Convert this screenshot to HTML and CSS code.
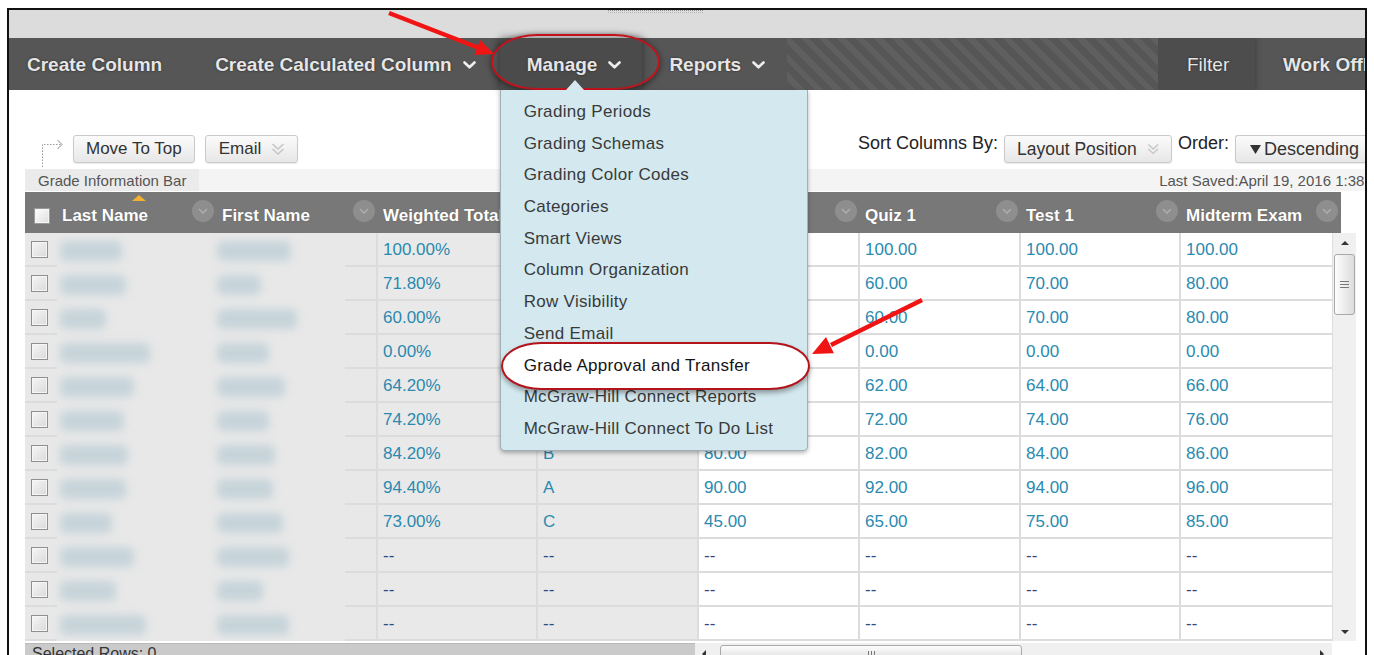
FILE: index.html
```html
<!DOCTYPE html>
<html lang="en">
<head>
<meta charset="utf-8">
<title>Full Grade Center</title>
<link rel="stylesheet" href="styles.css">
</head>
<body>
<div class="frame">
  <div class="topbar"><span class="grip"></span></div>

  <nav class="actionbar">
    <div class="nav-left">
      <span class="nav-item first">Create Column</span>
      <span class="nav-item calc">Create Calculated Column
        <svg class="chev" width="13" height="8" viewBox="0 0 13 8"><polyline points="1.5,1.5 6.5,6.3 11.5,1.5"/></svg>
      </span>
      <span class="nav-item open">Manage
        <svg class="chev" width="13" height="8" viewBox="0 0 13 8"><polyline points="1.5,1.5 6.5,6.3 11.5,1.5"/></svg>
        <ul class="menu">
          <li>Grading Periods</li>
          <li>Grading Schemas</li>
          <li>Grading Color Codes</li>
          <li>Categories</li>
          <li>Smart Views</li>
          <li>Column Organization</li>
          <li>Row Visibility</li>
          <li>Send Email</li>
          <li class="flagged"><span>Grade Approval and Transfer</span></li>
          <li>McGraw-Hill Connect Reports</li>
          <li>McGraw-Hill Connect To Do List</li>
        </ul>
      </span>
      <span class="nav-item">Reports
        <svg class="chev" width="13" height="8" viewBox="0 0 13 8"><polyline points="1.5,1.5 6.5,6.3 11.5,1.5"/></svg>
      </span>
    </div>
    <div class="nav-stripes"></div>
    <div class="nav-right">
      <span class="nav-item filter">Filter</span>
      <span class="nav-item work">Work Offline</span>
    </div>
  </nav>

  <main class="content">
    <div class="toolbar">
      <div class="tool-left">
        <svg class="move-icon" width="26" height="31" viewBox="0 0 26 31">
          <path d="M2.5 31 V8.5 H21"/>
          <polyline class="head" points="17.5,4 22,8.5 17.5,13"/>
        </svg>
        <button class="btn">Move To Top</button>
        <button class="btn">Email
          <svg class="dbl" width="14" height="14" viewBox="0 0 14 14"><polyline points="1.5,2 7,7 12.5,2"/><polyline points="1.5,7 7,12 12.5,7"/></svg>
        </button>
      </div>
      <div class="tool-right">
        <span class="lbl">Sort Columns By:</span>
        <button class="btn sel">Layout Position
          <svg class="dbl" width="14" height="14" viewBox="0 0 14 14"><polyline points="1.5,2 7,7 12.5,2"/><polyline points="1.5,7 7,12 12.5,7"/></svg>
        </button>
        <span class="lbl">Order:</span>
        <button class="btn order"><svg width="11" height="9" viewBox="0 0 11 9"><polygon points="0,0 11,0 5.5,9"/></svg>Descending</button>
      </div>
    </div>

    <div class="infobar">
      <span class="info-tab">Grade Information Bar</span>
      <span class="saved">Last Saved:April 19, 2016 1:38 PM</span>
    </div>

    <section class="grade-grid">
      <div class="head-row">
        <div class="h chk"><span class="box hbox"></span></div>
        <div class="h sorted">Last Name<span class="sort-mark"></span><span class="hmenu"><svg width="10" height="6" viewBox="0 0 10 6"><polyline points="1,1 5,5 9,1"/></svg></span></div>
        <div class="h">First Name<span class="hmenu"><svg width="10" height="6" viewBox="0 0 10 6"><polyline points="1,1 5,5 9,1"/></svg></span></div>
        <div class="h">Weighted Total<span class="hmenu"><svg width="10" height="6" viewBox="0 0 10 6"><polyline points="1,1 5,5 9,1"/></svg></span></div>
        <div class="h">Total<span class="hmenu"><svg width="10" height="6" viewBox="0 0 10 6"><polyline points="1,1 5,5 9,1"/></svg></span></div>
        <div class="h">Homework 1<span class="hmenu"><svg width="10" height="6" viewBox="0 0 10 6"><polyline points="1,1 5,5 9,1"/></svg></span></div>
        <div class="h">Quiz 1<span class="hmenu"><svg width="10" height="6" viewBox="0 0 10 6"><polyline points="1,1 5,5 9,1"/></svg></span></div>
        <div class="h">Test 1<span class="hmenu"><svg width="10" height="6" viewBox="0 0 10 6"><polyline points="1,1 5,5 9,1"/></svg></span></div>
        <div class="h">Midterm Exam<span class="hmenu"><svg width="10" height="6" viewBox="0 0 10 6"><polyline points="1,1 5,5 9,1"/></svg></span></div>
      </div>

      <div class="body-wrap">
        <div class="rows-view">
          <div class="row"><div class="c chk"><span class="box"></span></div><div class="c nm"><span class="blob" style="width:62px"></span></div><div class="c nm fn"><span class="blob" style="width:74px"></span></div><div class="c gr">100.00%</div><div class="c gr">A</div><div class="c">100.00</div><div class="c">100.00</div><div class="c">100.00</div><div class="c">100.00</div></div>
          <div class="row"><div class="c chk"><span class="box"></span></div><div class="c nm"><span class="blob" style="width:66px"></span></div><div class="c nm fn"><span class="blob" style="width:44px"></span></div><div class="c gr">71.80%</div><div class="c gr">C</div><div class="c">80.00</div><div class="c">60.00</div><div class="c">70.00</div><div class="c">80.00</div></div>
          <div class="row"><div class="c chk"><span class="box"></span></div><div class="c nm"><span class="blob" style="width:46px"></span></div><div class="c nm fn"><span class="blob" style="width:80px"></span></div><div class="c gr">60.00%</div><div class="c gr">D</div><div class="c">60.00</div><div class="c">60.00</div><div class="c">70.00</div><div class="c">80.00</div></div>
          <div class="row"><div class="c chk"><span class="box"></span></div><div class="c nm"><span class="blob" style="width:90px"></span></div><div class="c nm fn"><span class="blob" style="width:52px"></span></div><div class="c gr">0.00%</div><div class="c gr">F</div><div class="c">0.00</div><div class="c">0.00</div><div class="c">0.00</div><div class="c">0.00</div></div>
          <div class="row"><div class="c chk"><span class="box"></span></div><div class="c nm"><span class="blob" style="width:74px"></span></div><div class="c nm fn"><span class="blob" style="width:68px"></span></div><div class="c gr">64.20%</div><div class="c gr">D</div><div class="c">60.00</div><div class="c">62.00</div><div class="c">64.00</div><div class="c">66.00</div></div>
          <div class="row"><div class="c chk"><span class="box"></span></div><div class="c nm"><span class="blob" style="width:64px"></span></div><div class="c nm fn"><span class="blob" style="width:52px"></span></div><div class="c gr">74.20%</div><div class="c gr">C</div><div class="c">70.00</div><div class="c">72.00</div><div class="c">74.00</div><div class="c">76.00</div></div>
          <div class="row"><div class="c chk"><span class="box"></span></div><div class="c nm"><span class="blob" style="width:68px"></span></div><div class="c nm fn"><span class="blob" style="width:58px"></span></div><div class="c gr">84.20%</div><div class="c gr">B</div><div class="c">80.00</div><div class="c">82.00</div><div class="c">84.00</div><div class="c">86.00</div></div>
          <div class="row"><div class="c chk"><span class="box"></span></div><div class="c nm"><span class="blob" style="width:66px"></span></div><div class="c nm fn"><span class="blob" style="width:56px"></span></div><div class="c gr">94.40%</div><div class="c gr">A</div><div class="c">90.00</div><div class="c">92.00</div><div class="c">94.00</div><div class="c">96.00</div></div>
          <div class="row"><div class="c chk"><span class="box"></span></div><div class="c nm"><span class="blob" style="width:52px"></span></div><div class="c nm fn"><span class="blob" style="width:66px"></span></div><div class="c gr">73.00%</div><div class="c gr">C</div><div class="c">45.00</div><div class="c">65.00</div><div class="c">75.00</div><div class="c">85.00</div></div>
          <div class="row empty"><div class="c chk"><span class="box"></span></div><div class="c nm"><span class="blob" style="width:74px"></span></div><div class="c nm fn"><span class="blob" style="width:72px"></span></div><div class="c gr">--</div><div class="c gr">--</div><div class="c">--</div><div class="c">--</div><div class="c">--</div><div class="c">--</div></div>
          <div class="row empty"><div class="c chk"><span class="box"></span></div><div class="c nm"><span class="blob" style="width:56px"></span></div><div class="c nm fn"><span class="blob" style="width:46px"></span></div><div class="c gr">--</div><div class="c gr">--</div><div class="c">--</div><div class="c">--</div><div class="c">--</div><div class="c">--</div></div>
          <div class="row empty"><div class="c chk"><span class="box"></span></div><div class="c nm"><span class="blob" style="width:86px"></span></div><div class="c nm fn"><span class="blob" style="width:72px"></span></div><div class="c gr">--</div><div class="c gr">--</div><div class="c">--</div><div class="c">--</div><div class="c">--</div><div class="c">--</div></div>
        </div>
        <div class="vscroll">
          <span class="arr up"></span>
          <span class="vthumb"><i></i><i></i><i></i></span>
          <span class="arr down"></span>
        </div>
      </div>

      <div class="foot-row">
        <div class="selected">Selected Rows: 0</div>
        <div class="hscroll">
          <span class="harr left"></span>
          <span class="hthumb"><i></i><i></i><i></i></span>
          <span class="harr right"></span>
        </div>
      </div>
    </section>
  </main>
</div>

<svg class="marks" width="1374" height="655" viewBox="0 0 1374 655">
  <line x1="389" y1="13" x2="479" y2="48" />
  <polygon points="494,54 474.3,54.9 480.1,39.9" />
  <line x1="922" y1="300" x2="831" y2="345" />
  <polygon points="812,354 833.9,353.3 826,337.1" />
</svg>
</body>
</html>
```

FILE: styles.css
```css
* { box-sizing: border-box; }

html, body {
  margin: 0;
  background: #fff;
}

body {
  width: 1374px;
  height: 655px;
  overflow: hidden;
  position: relative;
  font-family: "Liberation Sans", Arial, sans-serif;
  color: #333;
}

/* outer window frame */
.frame {
  margin: 8px 0 0 7px;
  width: 1360px;
  height: 700px;
  border: 2px solid #111;
  border-bottom: none;
  overflow: hidden;
  background: #fff;
}

.topbar {
  height: 28px;
  background: #dcdcdc;
}
.topbar .grip {
  display: block;
  margin-left: 599px;
  width: 95px;
  height: 3px;
  border-top: 1px dotted #8a8a8a;
  border-bottom: 1px dotted #b5b5b5;
}

/* action bar */
.actionbar {
  display: flex;
  height: 52px;
  background: #565656;
}
.nav-left { display: flex; flex-shrink: 0; }
.nav-item {
  display: flex;
  align-items: center;
  gap: 11px;
  padding: 1px 22px 0 27px;
  color: #e6e6e6;
  font-size: 19px;
  font-weight: bold;
  white-space: nowrap;
  text-shadow: 0 0 2px #1e1e1e;
}
.nav-item.first { padding: 1px 26px 0 18px; }
.nav-item.calc { padding-right: 24px; }
.chev { fill: none; stroke: #eee; stroke-width: 2.6; stroke-linecap: round; stroke-linejoin: round; }

.nav-item.open {
  position: relative;
  background: #4b4b4b;
  box-shadow: 0 0 8px rgba(0, 0, 0, .45);
  padding-right: 21px;
}
/* red highlight ring round the open tab */
.nav-item.open::after {
  content: "";
  position: absolute;
  top: -4px;
  bottom: 0;
  left: -9px;
  right: -18px;
  border: 2px solid #c3121c;
  border-radius: 46px / 28px;
  box-shadow: 0 1px 6px rgba(0, 0, 0, .55);
}

.nav-stripes {
  flex: 1;
  background: repeating-linear-gradient(45deg, #565656 0 7px, #5f5f5f 7px 13px);
}
.nav-right { display: flex; width: 207px; flex-shrink: 0; overflow: hidden; }
.nav-item.filter {
  width: 97px;
  flex-shrink: 0;
  padding: 1px 0 0 29px;
  font-weight: normal;
  background: #4d4d4d;
  box-shadow: 0 0 6px rgba(0, 0, 0, .35);
}
.nav-item.work { padding: 1px 0 0 28px; }

/* Manage dropdown */
.menu {
  position: absolute;
  z-index: 10;
  top: 100%;
  left: 0;
  width: 308px;
  margin: 0;
  padding: 6px 0 5px;
  list-style: none;
  background: #d3e9ef;
  border: 1px solid #9fb1b6;
  border-top: none;
  border-radius: 0 0 5px 5px;
  box-shadow: 0 2px 4px rgba(0, 0, 0, .3);
  text-shadow: none;
}
.menu::before {
  content: "";
  position: absolute;
  top: -10px;
  left: 65px;
  border-left: 9px solid transparent;
  border-right: 9px solid transparent;
  border-bottom: 10px solid #d3e9ef;
}
.menu li {
  height: 31.7px;
  line-height: 31.7px;
  padding-left: 23px;
  font-size: 17px;
  letter-spacing: 0.3px;
  font-weight: normal;
  color: #3a3a3a;
}
.menu li.flagged { position: relative; color: #141414; }
.menu li.flagged::before {
  content: "";
  position: absolute;
  top: -8px;
  bottom: -9px;
  left: 0;
  right: -3px;
  background: #fff;
  border: 2px solid #b3141c;
  border-radius: 42px / 25px;
  box-shadow: 0 3px 5px rgba(0, 0, 0, .35);
}
.menu li.flagged span { position: relative; }

/* content */
.content { padding: 45px 0 0 16px; }

.toolbar {
  display: flex;
  align-items: center;
  width: 1360px;
  height: 28px;
}
.tool-left { display: flex; align-items: center; }
.move-icon {
  align-self: flex-start;
  margin: 4px 7px 0 15px;
  fill: none;
  stroke: #9a9a9a;
  stroke-width: 1;
}
.move-icon path { stroke-dasharray: 1.5 1.5; }
.move-icon .head { stroke: #8c8c8c; }

.btn {
  display: flex;
  align-items: center;
  gap: 10px;
  height: 28px;
  padding: 0 12px;
  border: 1px solid #cacaca;
  border-radius: 3px;
  background: linear-gradient(#fbfbfb, #e7e7e7);
  box-shadow: 0 1px 1px rgba(0, 0, 0, .08);
  font-family: inherit;
  font-size: 17px;
  color: #333;
  white-space: nowrap;
}
.tool-left .btn + .btn { margin-left: 10px; padding-left: 13px; }
.dbl { fill: none; stroke: #c6c6c6; stroke-width: 1.6; }

.tool-right { display: flex; align-items: center; margin-left: auto; }
.lbl {
  align-self: flex-start;
  margin-top: -1px;
  font-size: 18px;
  line-height: 19px;
  color: #222;
  white-space: nowrap;
}
.btn.sel {
  width: 168px;
  margin: 0 6px;
  justify-content: space-between;
  font-size: 17.5px;
}
.btn.order {
  width: 150px;
  margin-left: 6px;
  gap: 3px;
  padding-left: 14px;
  border-right: none;
  font-size: 18px;
}
.btn.order svg { fill: #333; }

.infobar {
  display: flex;
  align-items: center;
  width: 1366px;
  height: 22px;
  margin-top: 6px;
  background: #f4f4f4;
  font-size: 15px;
  color: #555;
}
.info-tab {
  display: flex;
  align-items: center;
  width: 174px;
  height: 100%;
  padding-left: 13px;
  background: #ebebeb;
}
.saved { margin-left: auto; white-space: nowrap; }

/* gradebook grid */
.grade-grid { width: 1331px; margin-top: 1px; }

.head-row,
.row {
  display: grid;
  grid-template-columns: 32px 160px 161px 160px 161px 161px 161px 160px 160px;
  width: 1316px;
}
.head-row {
  height: 41px;
  background: #787878;
}
.h {
  position: relative;
  display: flex;
  align-items: center;
  justify-content: space-between;
  padding: 7px 3px 0 5px;
  color: #fff;
  font-size: 17px;
  font-weight: bold;
  white-space: nowrap;
  text-shadow: 0 0 1px #555;
  overflow: hidden;
}
.h.chk { padding: 7px 0 0 9px; justify-content: flex-start; }
.hmenu {
  align-self: flex-start;
  display: flex;
  align-items: center;
  justify-content: center;
  flex-shrink: 0;
  width: 22px;
  height: 22px;
  margin-top: 1px;
  border-radius: 50%;
  background: #8e8e8e;
}
.hmenu svg { fill: none; stroke: #adadad; stroke-width: 1.6; }
.sort-mark {
  position: absolute;
  top: 3px;
  left: 75px;
  border-left: 7px solid transparent;
  border-right: 7px solid transparent;
  border-bottom: 6px solid #f3b132;
}

.body-wrap { display: flex; height: 408px; }
.rows-view { width: 1307px; overflow: hidden; }

.row { height: 34px; }
.c {
  display: flex;
  align-items: center;
  padding: 2px 0 0 5px;
  border-right: 2px solid #dcdcdc;
  border-bottom: 2px solid #dcdcdc;
  background: #fff;
  font-size: 17px;
  color: #2b8ab0;
  white-space: nowrap;
}
.c.chk { padding: 1px 0 0 6px; border-right: none; background: #e8e8e8; }
.c.gr { background: #e9e9e9; }
.c.nm { border: none; padding-left: 3px; background: #e8e8e8; }
.c.nm.fn {
  padding-left: 0;
  border-right: 2px solid #dcdcdc;
  background: linear-gradient(#dcdcdc, #dcdcdc) right bottom / 31px 2px no-repeat, #e8e8e8;
}
.row.empty .c { color: #2c4c86; }

.blob {
  display: block;
  height: 20px;
  border-radius: 6px;
  background: #c6d4da;
  filter: blur(4px);
}

.box {
  display: block;
  width: 17px;
  height: 17px;
  border: 1px solid #8f8f8f;
  box-shadow: inset 0 0 0 1px #f6f6f6;
  background: linear-gradient(135deg, #f6f6f6, #dadada);
}
.hbox {
  width: 16px;
  height: 16px;
  border-color: #9a9a9a;
  background: linear-gradient(135deg, #fff, #dedede);
}

.vscroll {
  display: flex;
  flex-direction: column;
  align-items: center;
  width: 24px;
  background: #f0f0f0;
  border-left: 1px solid #dedede;
}
.arr {
  width: 0;
  height: 0;
  border-left: 4px solid transparent;
  border-right: 4px solid transparent;
}
.arr.up { margin-top: 8px; border-bottom: 4px solid #333; }
.arr.down { margin: auto 0 7px; border-top: 4px solid #333; }
.vthumb {
  display: flex;
  flex-direction: column;
  align-items: center;
  justify-content: center;
  gap: 2px;
  width: 21px;
  height: 61px;
  margin-top: 9px;
  border: 1px solid #a9a9a9;
  border-radius: 3px;
  background: linear-gradient(90deg, #fdfdfd, #dcdcdc);
}
.vthumb i { display: block; width: 9px; height: 1px; background: #777; }

.foot-row { display: flex; height: 16px; margin-top: 2px; }
.selected {
  width: 670px;
  padding: 1px 0 0 7px;
  background: #cacaca;
  border-top: 1px solid #b9b9b9;
  font-size: 16px;
  color: #333;
}
.hscroll {
  display: flex;
  align-items: flex-start;
  width: 637px;
  padding-top: 2px;
  background: #f0f0f0;
}
.harr {
  width: 0;
  height: 0;
  margin-top: 5px;
  border-top: 4px solid transparent;
  border-bottom: 4px solid transparent;
}
.harr.left { margin-left: 7px; border-right: 4px solid #333; }
.harr.right { margin-left: auto; margin-right: 8px; border-left: 4px solid #333; }
.hthumb {
  display: flex;
  justify-content: center;
  gap: 2px;
  width: 302px;
  height: 16px;
  margin-left: 14px;
  padding-top: 5px;
  border: 1px solid #a9a9a9;
  border-radius: 3px;
  background: linear-gradient(#fdfdfd, #dcdcdc);
}
.hthumb i { display: block; width: 1px; height: 7px; background: #777; }

/* red call-out arrows */
.marks {
  position: absolute;
  top: 0;
  left: 0;
  pointer-events: none;
}
.marks line { stroke: #f01414; stroke-width: 4.5; }
.marks polygon { fill: #f01414; }
```
